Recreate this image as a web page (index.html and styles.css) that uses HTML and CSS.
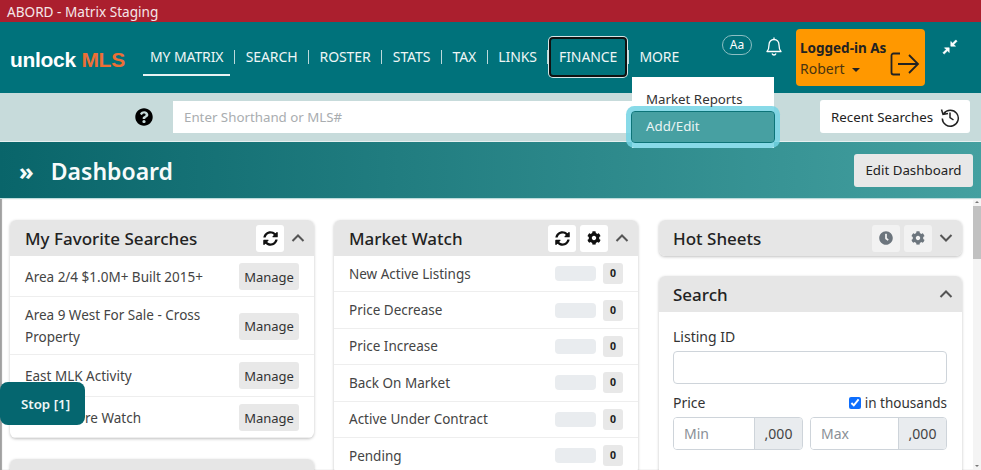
FILE: index.html
```html
<!DOCTYPE html>
<html lang="en">
<head>
    <meta charset="UTF-8">
    <meta name="viewport" content="width=device-width, initial-scale=1.0">
    <title>ABORD - Matrix Staging</title>
    <link rel="stylesheet" href="styles.css">
</head>
<body>
    <svg class="icon-defs" width="0" height="0" aria-hidden="true">
        <symbol id="i-help" viewBox="0 0 512 512"><path d="M504 256c0 136.997-111.043 248-248 248S8 392.997 8 256C8 119.083 119.043 8 256 8s248 111.083 248 248zM262.655 90c-54.497 0-89.255 22.957-116.549 63.758-3.536 5.286-2.353 12.415 2.715 16.258l34.699 26.31c5.205 3.947 12.621 3.008 16.665-2.122 17.864-22.658 30.113-35.797 57.303-35.797 20.429 0 45.698 13.148 45.698 32.958 0 14.976-12.363 22.667-32.534 33.976C247.128 238.528 216 254.941 216 296v4c0 6.627 5.373 12 12 12h56c6.627 0 12-5.373 12-12v-1.333c0-28.462 83.186-29.647 83.186-106.667 0-58.002-60.165-102-116.531-102zM256 338c-25.365 0-46 20.635-46 46 0 25.364 20.635 46 46 46s46-20.636 46-46c0-25.365-20.635-46-46-46z"/></symbol>
        <symbol id="i-sync" viewBox="0 0 512 512"><path d="M370.72 133.28C339.458 104.008 298.888 87.962 255.848 88c-77.458.068-144.328 53.178-162.791 126.85-1.344 5.363-6.122 9.15-11.651 9.15H24.103c-7.498 0-13.194-6.807-11.807-14.176C33.933 94.924 134.813 8 256 8c66.448 0 126.791 26.136 171.315 68.685L463.03 40.97C478.149 25.851 504 36.559 504 57.941V192c0 13.255-10.745 24-24 24H345.941c-21.382 0-32.09-25.851-16.971-40.971l41.75-41.749zM32 296h134.059c21.382 0 32.09 25.851 16.971 40.971l-41.75 41.75c31.262 29.273 71.835 45.319 114.876 45.28 77.418-.07 144.315-53.144 162.787-126.849 1.344-5.363 6.122-9.15 11.651-9.15h57.304c7.498 0 13.194 6.807 11.807 14.176C478.067 417.076 377.187 504 256 504c-66.448 0-126.791-26.136-171.315-68.685L48.97 471.03C33.851 486.149 8 475.441 8 454.059V320c0-13.255 10.745-24 24-24z"/></symbol>
        <symbol id="i-cog" viewBox="0 0 512 512"><path d="M487.4 315.7l-42.6-24.6c4.3-23.2 4.3-47 0-70.2l42.6-24.6c4.9-2.8 7.1-8.6 5.5-14-11.1-35.6-30-67.8-54.7-94.6-3.8-4.1-10-5.1-14.8-2.3L380.8 110c-17.9-15.4-38.5-27.3-60.8-35.1V25.8c0-5.6-3.9-10.5-9.4-11.7-36.7-8.2-74.3-7.8-109.2 0-5.5 1.2-9.4 6.1-9.4 11.7V75c-22.2 7.9-42.8 19.8-60.8 35.1L88.7 85.5c-4.9-2.8-11-1.9-14.8 2.3-24.7 26.7-43.6 58.9-54.7 94.6-1.7 5.4.6 11.2 5.5 14L67.3 221c-4.3 23.2-4.3 47 0 70.2l-42.6 24.6c-4.9 2.8-7.1 8.6-5.5 14 11.1 35.6 30 67.8 54.7 94.6 3.8 4.1 10 5.1 14.8 2.3l42.6-24.6c17.9 15.4 38.5 27.3 60.8 35.1v49.2c0 5.6 3.9 10.5 9.4 11.7 36.7 8.2 74.3 7.8 109.2 0 5.5-1.2 9.4-6.1 9.4-11.7v-49.2c22.2-7.9 42.8-19.8 60.8-35.1l42.6 24.6c4.9 2.8 11 1.9 14.8-2.3 24.7-26.7 43.6-58.9 54.7-94.6 1.5-5.5-.7-11.3-5.6-14.1zM256 336c-44.1 0-80-35.9-80-80s35.9-80 80-80 80 35.9 80 80-35.9 80-80 80z"/></symbol>
        <symbol id="i-clock" viewBox="0 0 512 512"><path d="M256,8C119,8,8,119,8,256S119,504,256,504,504,393,504,256,393,8,256,8Zm92.49,313h0l-20,25a16,16,0,0,1-22.49,2.5h0l-67-49.72a40,40,0,0,1-15-31.23V112a16,16,0,0,1,16-16h32a16,16,0,0,1,16,16V256l58,42.5A16,16,0,0,1,348.49,321Z"/></symbol>
        <symbol id="i-up" viewBox="0 0 16 16"><path d="M2.5 11L8 5.5l5.5 5.5" fill="none" stroke="currentColor" stroke-width="2"/></symbol>
        <symbol id="i-down" viewBox="0 0 16 16"><path d="M2.5 5L8 10.5 13.500 5" fill="none" stroke="currentColor" stroke-width="2"/></symbol>
    </svg>

    <div class="title-bar">ABORD - Matrix Staging</div>

    <!-- Main nav -->
    <header class="top-nav">
        <div class="brand">unlock <span class="brand-mls">MLS</span></div>
        <nav class="nav-links">
            <a class="nav-link active">MY MATRIX</a><span class="nav-sep"></span>
            <a class="nav-link">SEARCH</a><span class="nav-sep"></span>
            <a class="nav-link">ROSTER</a><span class="nav-sep"></span>
            <a class="nav-link">STATS</a><span class="nav-sep"></span>
            <a class="nav-link">TAX</a><span class="nav-sep"></span>
            <a class="nav-link">LINKS</a><span class="nav-sep"></span>
            <a class="nav-link focused">FINANCE</a><span class="nav-sep"></span>
            <a class="nav-link">MORE</a>
        </nav>
        <div class="nav-tools">
            <span class="font-pill">Aa</span>
            <svg class="bell" viewBox="0 0 18 20" width="18" height="20"><path d="M2 15.500c1.500-1.500 2-3 2-6.500 0-3.200 2-5.500 5-5.500s5 2.300 5 5.500c0 3.500.5 5 2 6.500zM9 3.500V1.500M7 17.500c.4 1 1.100 1.500 2 1.500s1.600-.5 2-1.500" fill="none" stroke="#fff" stroke-width="1.300" stroke-linejoin="round"/></svg>
            <div class="login-box">
                <div class="login-text">
                    <div class="login-title">Logged-in As</div>
                    <div class="login-name">Robert <span class="caret"></span></div>
                </div>
                <svg class="login-exit" viewBox="0 0 30 24" width="30" height="24"><path d="M10 1.500H3.500a2 2 0 0 0-2 2v17a2 2 0 0 0 2 2H10M8 12h20M19 3l9 9-9 9" fill="none" stroke="#222" stroke-width="1.800"/></svg>
            </div>
            <svg class="compress" viewBox="0 0 16 16" width="16" height="16"><path d="M8.800 7.200L8.800 2.500l1.700 1.700L13.800.9l1.300 1.300-3.300 3.300 1.700 1.700zM7.200 8.800v4.700l-1.700-1.700-3.300 3.300-1.300-1.300 3.300-3.300-1.700-1.700z" fill="#fff" stroke="#fff" stroke-width=".6"/></svg>
        </div>
        <div class="more-menu">
            <div class="more-item">Market Reports</div>
            <div class="more-item selected">Add/Edit</div>
        </div>
    </header>

    <!-- Shorthand search -->
    <div class="search-bar">
        <svg class="help-icon" width="18" height="18"><use href="#i-help"/></svg>
        <input class="shorthand" type="text" placeholder="Enter Shorthand or MLS#">
        <button class="recent-btn">Recent Searches
            <svg viewBox="0 0 20 20" width="20" height="20"><path d="M3.800 6.500A8 8 0 1 1 2.300 11.500M1.500 2.500L3 7.500l5-1M10 5.500v5l3.500 2.500" fill="none" stroke="#222" stroke-width="1.500"/></svg>
        </button>
    </div>

    <div class="page-head">
        <div class="page-title"><span class="chevrons">»</span>Dashboard</div>
        <button class="edit-btn">Edit Dashboard</button>
    </div>

    <div class="content">
        <main class="columns">
            <div class="column">
                <section class="card fav-card">
                    <div class="card-head">
                        <h2>My Favorite Searches</h2>
                        <button class="icon-btn"><svg width="15" height="15"><use href="#i-sync"/></svg></button>
                        <svg class="chevron" width="16" height="16"><use href="#i-up"/></svg>
                    </div>
                    <div class="fav-row"><span>Area 2/4 $1.0M+ Built 2015+</span><button class="manage">Manage</button></div>
                    <div class="fav-row"><span>Area 9 West For Sale - Cross Property</span><button class="manage">Manage</button></div>
                    <div class="fav-row"><span>East MLK Activity</span><button class="manage">Manage</button></div>
                    <div class="fav-row"><span class="fav-covered">re Watch</span><button class="manage">Manage</button></div>
                </section>
                <section class="card">
                    <div class="card-head"></div>
                </section>
            </div>

            <div class="column">
                <section class="card">
                    <div class="card-head">
                        <h2>Market Watch</h2>
                        <button class="icon-btn"><svg width="15" height="15"><use href="#i-sync"/></svg></button>
                        <button class="icon-btn"><svg width="14" height="14"><use href="#i-cog"/></svg></button>
                        <svg class="chevron" width="16" height="16"><use href="#i-up"/></svg>
                    </div>
                    <div class="watch-row"><span>New Active Listings</span><i class="watch-bar"></i><b class="watch-count">0</b></div>
                    <div class="watch-row"><span>Price Decrease</span><i class="watch-bar"></i><b class="watch-count">0</b></div>
                    <div class="watch-row"><span>Price Increase</span><i class="watch-bar"></i><b class="watch-count">0</b></div>
                    <div class="watch-row"><span>Back On Market</span><i class="watch-bar"></i><b class="watch-count">0</b></div>
                    <div class="watch-row"><span>Active Under Contract</span><i class="watch-bar"></i><b class="watch-count">0</b></div>
                    <div class="watch-row"><span>Pending</span><i class="watch-bar"></i><b class="watch-count">0</b></div>
                </section>
            </div>

            <div class="column">
                <section class="card">
                    <div class="card-head">
                        <h2>Hot Sheets</h2>
                        <button class="icon-btn muted"><svg width="14" height="14"><use href="#i-clock"/></svg></button>
                        <button class="icon-btn muted"><svg width="14" height="14"><use href="#i-cog"/></svg></button>
                        <svg class="chevron" width="16" height="16"><use href="#i-down"/></svg>
                    </div>
                </section>
                <section class="card">
                    <div class="card-head">
                        <h2>Search</h2>
                        <svg class="chevron" width="16" height="16"><use href="#i-up"/></svg>
                    </div>
                    <form class="search-form">
                        <label class="field-label">Listing ID</label>
                        <input class="text-input" type="text">
                        <div class="price-label">
                            <label class="field-label">Price</label>
                            <label class="thousands"><input type="checkbox" checked>in thousands</label>
                        </div>
                        <div class="price-row">
                            <div class="price-group min"><input type="text" placeholder="Min"><span>,000</span></div>
                            <div class="price-group"><input type="text" placeholder="Max"><span>,000</span></div>
                        </div>
                    </form>
                </section>
            </div>
        </main>
        <div class="scrollbar"><div class="scroll-thumb"></div></div>
    </div>

    <button class="stop-btn">Stop [1]</button>
</body>
</html>
```

FILE: styles.css
```css
/* Basic page styling */
html, body {
    height: 470px;
    overflow: hidden;
}
body {
    margin: 0;
    font-family: "Noto Sans", Arial, sans-serif;
    font-size: 14px;
    color: #333;
    background: #fff;
}
button, input {
    font-family: inherit;
}
.icon-defs {
    position: absolute;
}

/* Title bar */
.title-bar {
    height: 22px;
    line-height: 23px;
    padding-left: 7px;
    background: #ab1f2e;
    color: #f5e6e8;
    font-size: 13.600px;
}

/* Main nav */
.top-nav {
    position: relative;
    display: flex;
    height: 71px;
    background: #00727b;
    color: #fff;
}
.brand {
    width: 143px;
    padding: 26px 0 0 10px;
    box-sizing: border-box;
    font-family: "Liberation Sans", Arial, sans-serif;
    font-size: 21px;
    font-weight: bold;
    letter-spacing: -0.3px;
    white-space: nowrap;
}
.brand-mls {
    color: #ee6f35;
}
.nav-links {
    display: flex;
    align-items: center;
    height: 54px;
    margin-top: 8px;
}
.nav-link {
    display: block;
    padding: 0 7px;
    line-height: 34px;
    font-size: 14px;
    letter-spacing: -0.1px;
    color: #eef6f6;
    white-space: nowrap;
    border-bottom: 2px solid transparent;
    border-top: 2px solid transparent;
}
.nav-link.active {
    border-bottom-color: #e8f3f3;
}
.nav-link.focused {
    margin: 0 -2px;
    padding: 0 9px;
    outline: 2px solid #111;
    outline-offset: -1px;
    box-shadow: 0 0 0 2px #d7e6e6;
    border-radius: 3px;
}
.nav-sep {
    width: 1px;
    height: 14px;
    margin: 0 3.600px;
    background: #bcd9db;
}
.nav-tools {
    display: flex;
    align-items: flex-start;
    margin-left: auto;
}
.font-pill {
    width: 28px;
    height: 18px;
    margin-top: 13px;
    border: 1px solid #8cbfc3;
    border-radius: 10px;
    font-size: 12px;
    line-height: 18px;
    text-align: center;
}
.bell {
    margin: 14px 0 0 13px;
}
.login-box {
    display: flex;
    width: 129px;
    height: 57px;
    margin: 7px 0 0 13px;
    box-sizing: border-box;
    padding: 9px 0 0 4px;
    background: #ff9800;
    border-radius: 4px;
    color: #222;
}
.login-title {
    font-size: 13.500px;
    font-weight: 700;
    line-height: 20px;
    white-space: nowrap;
}
.login-name {
    margin-top: 1px;
    font-size: 14px;
    line-height: 20px;
    color: #4a3510;
}
.caret {
    display: inline-block;
    margin-left: 4px;
    vertical-align: 2px;
    border: 4px solid transparent;
    border-top-color: #222;
    border-bottom: 0;
}
.login-exit {
    margin: 14px 0 0 4px;
}
.compress {
    margin: 17px 23px 0 17px;
}

/* Dropdown under MORE */
.more-menu {
    position: absolute;
    left: 632px;
    top: 55px;
    z-index: 5;
    width: 142px;
    height: 71px;
    box-sizing: border-box;
    padding-top: 12px;
    background: #fff;
    font-size: 13.300px;
}
.more-item {
    height: 26px;
    line-height: 20px;
    padding-left: 14px;
    color: #333;
}
.more-item.selected {
    height: 30px;
    margin-top: -3px;
    line-height: 29px;
    color: #eaf4f4;
    background: #47a0a2;
    outline: 1px solid #0d7478;
    border-radius: 3px;
    box-shadow: 0 0 0 6px rgba(115, 212, 228, 0.85);
}

/* Shorthand search */
.search-bar {
    display: flex;
    align-items: flex-start;
    height: 48px;
    background: #c7dbdb;
    border-bottom: 1px solid #e6f0f0;
}
.help-icon {
    width: 18px;
    height: 18px;
    margin: 15px 0 0 135px;
    fill: #000;
}
.shorthand {
    width: 590px;
    height: 32px;
    margin: 8px 0 0 20px;
    padding: 0 11px;
    box-sizing: border-box;
    border: 0;
    background: #fff;
    font-size: 13.300px;
}
.shorthand::placeholder {
    color: #a9adb0;
}
.recent-btn {
    display: flex;
    align-items: center;
    gap: 7px;
    width: 150px;
    height: 33px;
    margin: 7px 11px 0 auto;
    padding: 0 0 0 11px;
    border: 0;
    border-radius: 3px;
    background: #fff;
    color: #222;
    font-size: 13.300px;
    white-space: nowrap;
}

/* Page header */
.page-head {
    display: flex;
    align-items: center;
    justify-content: space-between;
    height: 56px;
    padding: 0 8px 0 19px;
    background: linear-gradient(90deg, #09656a 0%, #44a0a0 100%);
    border-bottom: 1px solid #bcdcdc;
}
.page-title {
    color: #f7fbfb;
    font-size: 23px;
    font-weight: 600;
}
.chevrons {
    margin-right: 17px;
    font-size: 24px;
    font-weight: 700;
}
.edit-btn {
    width: 119px;
    height: 33px;
    border: 0;
    border-radius: 3px;
    background: #e8e8e8;
    color: #222;
    font-size: 13.300px;
}

/* Dashboard columns */
.content {
    display: flex;
    height: 271px;
    overflow: hidden;
    background: #fff;
    box-shadow: inset 2px 0 1px #a0a0a0;
}
.columns {
    display: grid;
    grid-template-columns: 304px 304px 304px;
    column-gap: 20px;
    flex: 1;
    padding: 21px 0 0 10px;
}
.column:last-child {
    margin-left: 1px;
}
.column:last-child .card-head {
    padding-left: 14px;
}
.card {
    margin-bottom: 20px;
    border-radius: 6px;
    background: #fff;
    box-shadow: 0 1px 3px rgba(0,0,0,0.25);
    overflow: hidden;
}
.fav-card {
    margin-bottom: 21px;
}
.card-head {
    display: flex;
    align-items: center;
    gap: 4px;
    height: 36px;
    padding: 0 8px 0 15px;
    background: #e6e6e6;
}
.card-head h2 {
    flex: 1;
    margin: 0;
    font-size: 17px;
    font-weight: 500;
    color: #222;
    white-space: nowrap;
}
.icon-btn {
    display: flex;
    align-items: center;
    justify-content: center;
    width: 28px;
    height: 27px;
    padding: 0;
    border: 0;
    border-radius: 3px;
    background: #fff;
    color: #111;
}
.icon-btn svg {
    fill: currentColor;
}
.icon-btn.muted {
    background: #f2f2f2;
    color: #6c757d;
}
.chevron {
    margin-left: 2px;
    color: #555;
}

/* Favorite searches */
.fav-row {
    display: flex;
    align-items: center;
    gap: 12px;
    padding: 7px 15px 6px;
    border-bottom: 1px solid #eee;
    line-height: 22px;
    color: #444;
    font-size: 13.500px;
}
.fav-row:nth-child(4) {
    padding-bottom: 7px;
}
.fav-row span {
    flex: 1;
}
.fav-row .fav-covered {
    padding-left: 60px;
}
.manage {
    width: 60px;
    height: 27px;
    padding: 0;
    border: 0;
    border-radius: 3px;
    background: #e8e8e8;
    color: #333;
    font-size: 13px;
}

/* Market watch */
.watch-row {
    display: flex;
    align-items: center;
    height: 36.400px;
    box-sizing: border-box;
    padding: 0 15px;
    border-bottom: 1px solid #eee;
    color: #444;
    font-size: 13.500px;
}
.watch-row span {
    flex: 1;
}
.watch-bar {
    width: 41px;
    height: 15px;
    margin-right: 7px;
    border-radius: 4px;
    background: #e9ecef;
}
.watch-count {
    width: 20px;
    height: 21px;
    border-radius: 3px;
    background: #e8e8e8;
    font-size: 10.500px;
    line-height: 20px;
    text-align: center;
    color: #222;
}

/* Search form */
.search-form {
    padding: 15px 15px 40px 14px;
}
.field-label {
    display: block;
    font-size: 14px;
    line-height: 20px;
    color: #333;
}
.text-input {
    display: block;
    width: 100%;
    height: 33px;
    margin-top: 4px;
    box-sizing: border-box;
    border: 1px solid #ced4da;
    border-radius: 4px;
}
.price-label {
    display: flex;
    justify-content: space-between;
    margin-top: 9px;
}
.thousands {
    display: flex;
    align-items: center;
    gap: 4px;
    font-size: 13.500px;
    line-height: 20px;
    color: #333;
}
.thousands input {
    width: 12px;
    height: 12px;
    margin: 0;
    accent-color: #0d6efd;
}
.price-row {
    display: flex;
    gap: 7px;
    margin-top: 4px;
}
.price-group {
    display: flex;
    width: 137px;
    height: 33px;
    box-sizing: border-box;
    border: 1px solid #ced4da;
    border-radius: 4px;
    overflow: hidden;
}
.price-group.min {
    width: 130px;
}
.price-group input {
    flex: 1;
    min-width: 0;
    padding: 0 10px;
    border: 0;
    font-size: 14px;
}
.price-group input::placeholder {
    color: #8a9096;
}
.price-group span {
    width: 47px;
    border-left: 1px solid #ced4da;
    background: #e9ecef;
    color: #444;
    line-height: 31px;
    text-align: center;
}

/* Scrollbar */
.scrollbar {
    display: flex;
    flex-direction: column;
    width: 8px;
    background: #f4f4f4;
}
.scrollbar::before,
.scrollbar::after {
    content: "";
    align-self: center;
    border: 2.500px solid transparent;
}
.scrollbar::before {
    margin-top: 2px;
    margin-bottom: 3px;
    border-top: 0;
    border-bottom-color: #777;
}
.scrollbar::after {
    margin-top: auto;
    margin-bottom: 3px;
    border-bottom: 0;
    border-top-color: #777;
}
.scroll-thumb {
    height: 53px;
    background: #c1c1c1;
}

/* Floating stop button */
.stop-btn {
    position: absolute;
    left: 0;
    top: 382px;
    width: 85px;
    height: 43px;
    padding: 1px 0 0 6px;
    border: 0;
    border-radius: 8px;
    background: #05666f;
    color: #eef6f6;
    font-size: 13.300px;
    font-weight: 600;
}
```
